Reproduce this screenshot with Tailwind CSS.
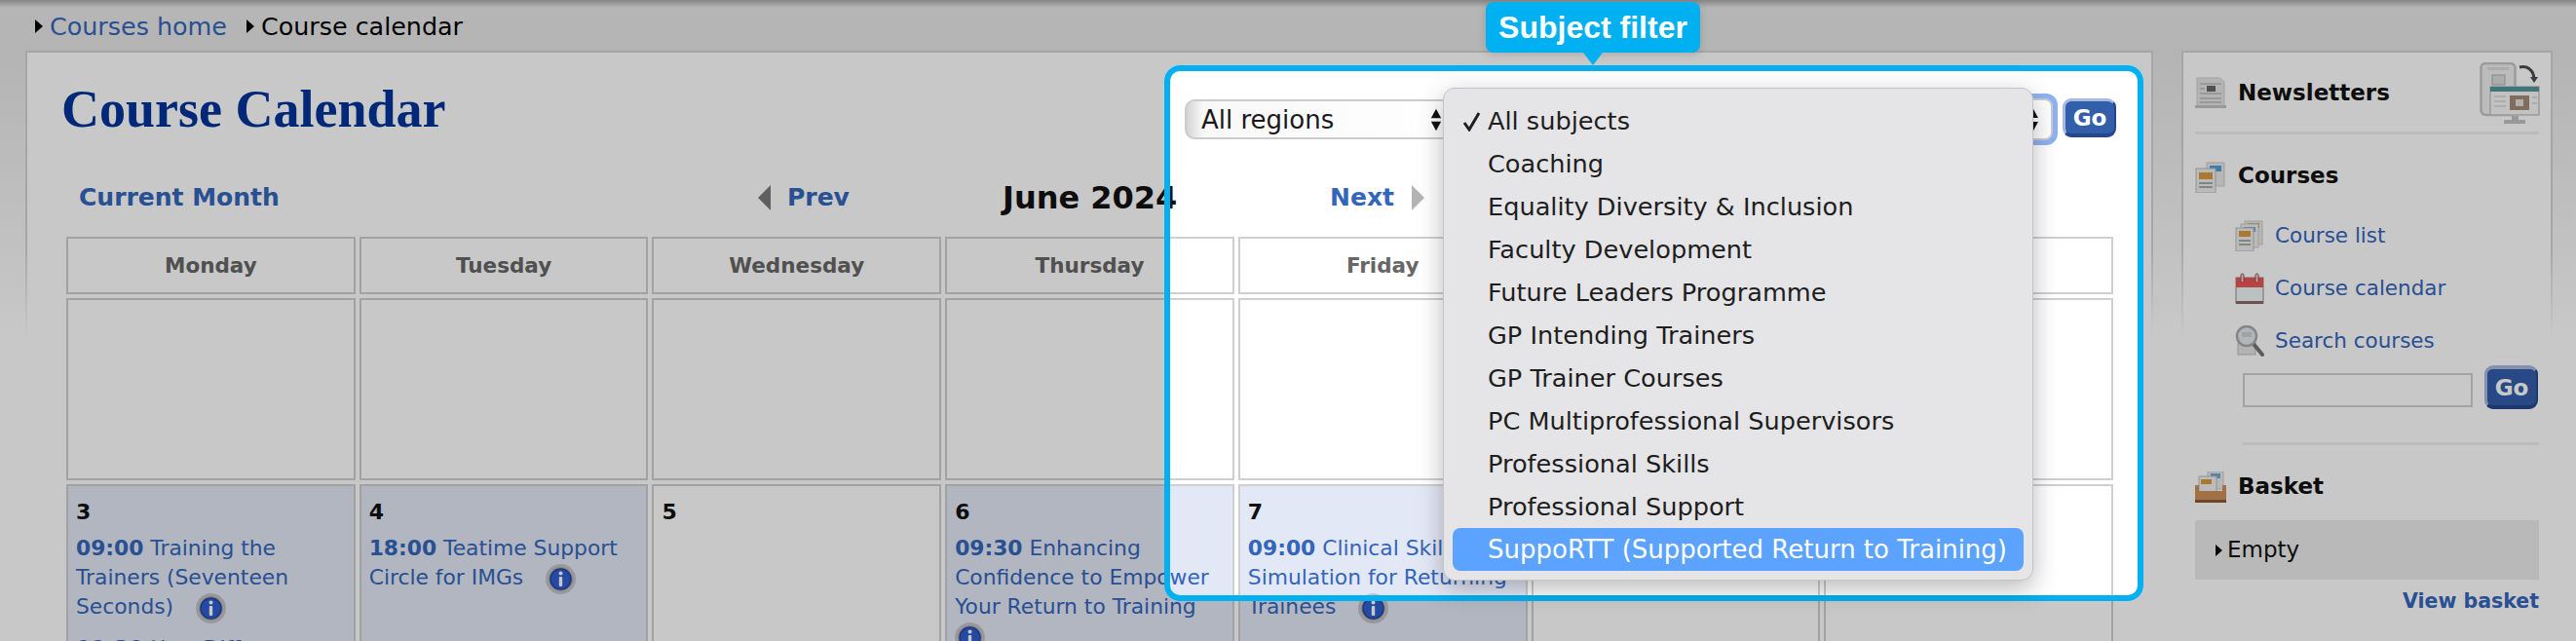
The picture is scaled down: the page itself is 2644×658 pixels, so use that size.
<!DOCTYPE html>
<html>
<head>
<title>Course calendar</title>
<script src="https://cdn.jsdelivr.net/npm/@tailwindcss/browser@4"></script>
</head>
<body>
<div class="relative w-[2644px] h-[658px] overflow-hidden font-['DejaVu_Sans',sans-serif] bg-[linear-gradient(to_bottom,#aaaaaa,#e8e8e8_8px,#e6e6e6_52px,#ffffff_345px)]">

  <!-- breadcrumb -->
  <div class="flex items-center h-[52px] pl-[36px] text-[25.4px] pt-[2px]">
    <svg class="w-[8px] h-[14px] mr-[7px]" viewBox="0 0 8 14"><path d="M0 0L8 7L0 14Z" fill="#000"/></svg>
    <a class="text-[#3366bb]">Courses home</a>
    <svg class="w-[8px] h-[14px] ml-[20px] mr-[7px]" viewBox="0 0 8 14"><path d="M0 0L8 7L0 14Z" fill="#000"/></svg>
    <span class="text-black">Course calendar</span>
  </div>

  <div class="flex items-start ml-[26px]">
    <!-- main panel -->
    <div class="w-[2184px] h-[640px] pt-[2px] px-[2px] bg-[linear-gradient(to_bottom,#d4d4d4,#d4d4d4_200px,#ffffff_295px)]">
      <div class="bg-white h-full pl-[40px] pr-[36px]">
        <div class="flex items-start h-[128px]">
          <h1 class="mt-[28px] -ml-[5px] font-['Liberation_Serif',serif] font-bold text-[54px] leading-[60px] text-[#003399]">Course Calendar</h1>
          <div class="ml-auto mt-[47px] flex items-start">
            <div class="flex items-center justify-between w-[280px] h-[41px] mt-[1px] rounded-[10px] border-2 border-[#cccccc] bg-[linear-gradient(to_right,#d4d4d4,#f8f8f8_6%,#ffffff)] pl-[15px] pr-[14px] text-[26px] leading-[36px] text-[#1a1a1a]">
              All regions
              <svg class="w-[12px] h-[24px]" viewBox="0 0 14 28"><path d="M7 1L13 12H1ZM7 27L1 16H13Z" fill="#111"/></svg>
            </div>
            <div class="ml-[9px] w-[607px] h-[53px] -mt-[5px] rounded-[12px] bg-[#8eb2f2] p-[5px]">
              <div class="w-full h-full rounded-[8px] border-2 border-[#cccccc] bg-white flex items-center justify-end pr-[12px]">
                <svg class="w-[14px] h-[28px]" viewBox="0 0 14 28"><path d="M7 1L13 12H1ZM7 27L1 16H13Z" fill="#111"/></svg>
              </div>
            </div>
            <button class="ml-[5px] w-[55px] h-[40px] rounded-[9px] border-t-[3px] border-l-[3px] border-r-[2px] border-b-[4px] border-t-[#a6b9e0] border-l-[#a6b9e0] border-r-[#24488c] border-b-[#24488c] bg-[#335eaa] text-white font-bold text-[23px] leading-[30px]">Go</button>
          </div>
        </div>

        <div class="flex items-center h-[40px] mt-[1px] mb-[20px] font-bold text-[#3366bb] text-[25px]">
          <a class="ml-[13px] w-[697px]">Current Month</a>
          <svg class="w-[13px] h-[26px] mr-[17px]" viewBox="0 0 13 26"><path d="M13 0V26L0 13Z" fill="#7a7a7a"/></svg>
          <a class="w-[221px]">Prev</a>
          <span class="w-[336px] text-[32px] text-[#111111]">June 2024</span>
          <a class="w-[84px]">Next</a>
          <svg class="w-[13px] h-[26px]" viewBox="0 0 13 26"><path d="M0 0V26L13 13Z" fill="#b4b4b4"/></svg>
        </div>

        <div class="grid grid-cols-7 gap-[4px] grid-rows-[59px_187px_220px] w-[2101px] text-[21.8px] leading-[30px] text-[#3366bb]">
          <div class="border-2 border-[#cfcfcf] flex items-center justify-center font-bold text-[21.5px] text-[#666666]">Monday</div>
          <div class="border-2 border-[#cfcfcf] flex items-center justify-center font-bold text-[21.5px] text-[#666666]">Tuesday</div>
          <div class="border-2 border-[#cfcfcf] flex items-center justify-center font-bold text-[21.5px] text-[#666666]">Wednesday</div>
          <div class="border-2 border-[#cfcfcf] flex items-center justify-center font-bold text-[21.5px] text-[#666666]">Thursday</div>
          <div class="border-2 border-[#cfcfcf] flex items-center justify-center font-bold text-[21.5px] text-[#666666]">Friday</div>
          <div class="border-2 border-[#cfcfcf] flex items-center justify-center font-bold text-[21.5px] text-[#666666]">Saturday</div>
          <div class="border-2 border-[#cfcfcf] flex items-center justify-center font-bold text-[21.5px] text-[#666666]">Sunday</div>

          <div class="border-2 border-[#cfcfcf]"></div>
          <div class="border-2 border-[#cfcfcf]"></div>
          <div class="border-2 border-[#cfcfcf]"></div>
          <div class="border-2 border-[#cfcfcf]"></div>
          <div class="border-2 border-[#cfcfcf]"></div>
          <div class="border-2 border-[#cfcfcf]"></div>
          <div class="border-2 border-[#cfcfcf]"></div>

          <div class="border-2 border-[#cfcfcf] bg-[#e3e8f6] pt-[12px] pl-[8px]">
            <div class="font-bold text-[22px] text-[#111111] mb-[7px]">3</div>
            <div class="mb-[13px]"><b>09:00</b> Training the Trainers (Seventeen Seconds)
              <svg class="inline-block align-middle ml-[16px] -my-[2px] w-[31px] h-[31px]" viewBox="0 0 31 31"><circle cx="15.5" cy="15.5" r="14" fill="#a9aab0" stroke="#c4c4c8" stroke-width="3"/><circle cx="15.5" cy="15.5" r="10.5" fill="#2f5fd0" stroke="#24459c" stroke-width="1.5"/><circle cx="15.5" cy="9.5" r="2" fill="#fff"/><rect x="13.8" y="13" width="3.4" height="10" rx="1" fill="#fff"/></svg>
            </div>
            <div><b>09:30</b> How Different</div>
          </div>
          <div class="border-2 border-[#cfcfcf] bg-[#e3e8f6] pt-[12px] pl-[8px]">
            <div class="font-bold text-[22px] text-[#111111] mb-[7px]">4</div>
            <div><b>18:00</b> Teatime Support Circle for IMGs
              <svg class="inline-block align-middle ml-[16px] -my-[2px] w-[31px] h-[31px]" viewBox="0 0 31 31"><circle cx="15.5" cy="15.5" r="14" fill="#a9aab0" stroke="#c4c4c8" stroke-width="3"/><circle cx="15.5" cy="15.5" r="10.5" fill="#2f5fd0" stroke="#24459c" stroke-width="1.5"/><circle cx="15.5" cy="9.5" r="2" fill="#fff"/><rect x="13.8" y="13" width="3.4" height="10" rx="1" fill="#fff"/></svg>
            </div>
          </div>
          <div class="border-2 border-[#cfcfcf] pt-[12px] pl-[8px]">
            <div class="font-bold text-[22px] text-[#111111]">5</div>
          </div>
          <div class="border-2 border-[#cfcfcf] bg-[#e3e8f6] pt-[12px] pl-[8px]">
            <div class="font-bold text-[22px] text-[#111111] mb-[7px]">6</div>
            <div><b>09:30</b> Enhancing Confidence to Empower Your Return to Training
              <svg class="inline-block align-middle -my-[2px] w-[31px] h-[31px]" viewBox="0 0 31 31"><circle cx="15.5" cy="15.5" r="14" fill="#a9aab0" stroke="#c4c4c8" stroke-width="3"/><circle cx="15.5" cy="15.5" r="10.5" fill="#2f5fd0" stroke="#24459c" stroke-width="1.5"/><circle cx="15.5" cy="9.5" r="2" fill="#fff"/><rect x="13.8" y="13" width="3.4" height="10" rx="1" fill="#fff"/></svg>
            </div>
          </div>
          <div class="border-2 border-[#cfcfcf] bg-[#e3e8f6] pt-[12px] pl-[8px]">
            <div class="font-bold text-[22px] text-[#111111] mb-[7px]">7</div>
            <div><b>09:00</b> Clinical Skills Simulation for Returning Trainees
              <svg class="inline-block align-middle ml-[16px] -my-[2px] w-[31px] h-[31px]" viewBox="0 0 31 31"><circle cx="15.5" cy="15.5" r="14" fill="#a9aab0" stroke="#c4c4c8" stroke-width="3"/><circle cx="15.5" cy="15.5" r="10.5" fill="#2f5fd0" stroke="#24459c" stroke-width="1.5"/><circle cx="15.5" cy="9.5" r="2" fill="#fff"/><rect x="13.8" y="13" width="3.4" height="10" rx="1" fill="#fff"/></svg>
            </div>
          </div>
          <div class="border-2 border-[#cfcfcf] pt-[12px] pl-[8px]">
            <div class="font-bold text-[22px] text-[#111111]">8</div>
          </div>
          <div class="border-2 border-[#cfcfcf] pt-[12px] pl-[8px]">
            <div class="font-bold text-[22px] text-[#111111]">9</div>
          </div>
        </div>
      </div>
    </div>

    <!-- sidebar -->
    <div class="ml-[29px] w-[381px] h-[640px] pt-[2px] px-[2px] bg-[linear-gradient(to_bottom,#d4d4d4,#d4d4d4_200px,#ffffff_295px)]">
      <div class="bg-white h-full px-[12px] text-[21.5px] text-[#3366bb]">
        <div class="relative flex items-center h-[84px] border-b-[3px] border-[#f0f0f0] pt-[1px]">
          <svg class="w-[32px] h-[32px] mr-[12px]" viewBox="0 0 32 32"><path d="M2 1H26L30 5V30H2Z" fill="#e6e6e6" stroke="#d0d0d0"/><path d="M5 7H27M5 12H10M5 17H27M5 22H27M5 26H27" stroke="#b8b8b8" stroke-width="1.5"/><rect x="12" y="9" width="9" height="6" fill="#666"/><rect x="0" y="29" width="32" height="3" fill="#c4c4c4"/></svg>
          <h2 class="font-bold text-[23px] text-[#111111]">Newsletters</h2>
          <svg class="absolute right-[-2px] top-[10px] w-[63px] h-[64px]" viewBox="0 0 63 64"><rect x="1.5" y="1" width="35" height="53" rx="5" fill="#f0f0f0" stroke="#c6c6c6" stroke-width="2.5"/><rect x="8" y="5" width="22" height="3" fill="#dddddd"/><rect x="13" y="13" width="13" height="10" fill="#dcdcdc" stroke="#b0b0b0"/><rect x="11" y="25" width="50" height="29" fill="#f8f8f8" stroke="#c6c6c6" stroke-width="1.5"/><rect x="11" y="25" width="50" height="5" fill="#53979b"/><rect x="31" y="34" width="20" height="15" fill="#a58c78"/><rect x="37" y="38" width="8" height="7" fill="#e4e0dc"/><path d="M15 35H27M15 40H27M15 45H27M54 36H59M54 42H59" stroke="#dddddd" stroke-width="2"/><path d="M33 55H40V59H47V63H25V59H33Z" fill="#c4c4c4"/><path d="M41 5C50 3 56 9 56 18" fill="none" stroke="#4c4c4c" stroke-width="3"/><path d="M52 15L56 21L60 15Z" fill="#4c4c4c"/></svg>
        </div>

        <div class="flex items-start mt-[28px]">
          <svg class="w-[32px] h-[32px] mr-[12px]" viewBox="0 0 32 32"><rect x="12" y="1" width="18" height="24" fill="#e8e8e8" stroke="#ccc"/><rect x="15" y="4" width="12" height="6" fill="#4f9fd6"/><rect x="1" y="7" width="20" height="25" fill="#ededed" stroke="#bbb"/><rect x="4" y="11" width="14" height="7" fill="#d99a3c"/><path d="M4 22H18M4 26H18" stroke="#aaa" stroke-width="2"/></svg>
          <h2 class="font-bold text-[23px] leading-[30px] text-[#111111] -mt-[1px]">Courses</h2>
        </div>

        <div class="flex items-center ml-[41px] mt-[28px] h-[32px]">
          <svg class="w-[30px] h-[32px] mr-[11px]" viewBox="0 0 30 32"><rect x="10" y="1" width="18" height="24" fill="#e8e8e8" stroke="#ccc"/><rect x="13" y="3" width="12" height="5" fill="#c99548"/><rect x="6" y="4" width="18" height="24" fill="#eee" stroke="#ccc"/><rect x="9" y="7" width="12" height="5" fill="#6ea8d8"/><rect x="1" y="8" width="18" height="24" fill="#eee" stroke="#bbb"/><rect x="4" y="11" width="12" height="6" fill="#d99a3c"/><path d="M4 21H16M4 25H16" stroke="#aaa" stroke-width="2"/></svg>
          <a>Course list</a>
        </div>
        <div class="flex items-center ml-[41px] mt-[22px] h-[32px]">
          <svg class="w-[30px] h-[32px] mr-[11px]" viewBox="0 0 30 32"><rect x="1" y="5" width="28" height="26" fill="#eef6f6" stroke="#9a8a88"/><rect x="1" y="5" width="28" height="10" fill="#ee5555"/><rect x="1" y="29" width="28" height="3" fill="#8a6a66"/><rect x="6" y="1" width="3" height="9" rx="1.5" fill="#dddddd" stroke="#9a4444"/><rect x="21" y="1" width="3" height="9" rx="1.5" fill="#dddddd" stroke="#9a4444"/></svg>
          <a>Course calendar</a>
        </div>
        <div class="flex items-center ml-[41px] mt-[22px] h-[32px]">
          <svg class="w-[30px] h-[32px] mr-[11px]" viewBox="0 0 30 32"><rect x="3" y="18" width="18" height="12" fill="#e4e4e4" stroke="#bbb"/><path d="M19 19L28 30" stroke="#777" stroke-width="4" stroke-linecap="round"/><circle cx="12" cy="11" r="10" fill="#dfe8f0" stroke="#aaa" stroke-width="2.5"/><rect x="7" y="7" width="10" height="5" fill="#cfcfcf"/></svg>
          <a>Search courses</a>
        </div>
        <div class="flex items-start ml-[49px] mt-[9px] pb-[34px] border-b-[3px] border-[#f0f0f0]">
          <div class="w-[236px] h-[35px] mt-[8px] border-2 border-[#d0d0d0] bg-white"></div>
          <button class="ml-[12px] w-[55px] h-[45px] rounded-[9px] border-t-[4px] border-l-[3px] border-r-[2px] border-b-[4px] border-t-[#a6b9e0] border-l-[#a6b9e0] border-r-[#24488c] border-b-[#24488c] bg-[#335eaa] text-white font-bold text-[23px] leading-[30px]">Go</button>
        </div>

        <div class="flex items-start mt-[27px]">
          <svg class="w-[32px] h-[32px] mr-[12px]" viewBox="0 0 32 32"><rect x="13" y="0" width="16" height="18" fill="#e8e8e8" stroke="#ccc"/><rect x="16" y="2" width="10" height="5" fill="#6ea8d8"/><rect x="4" y="5" width="18" height="16" fill="#f0f0f0" stroke="#bbb"/><rect x="6" y="8" width="11" height="5" fill="#d99a3c"/><path d="M0 14L4 14V20H28V14H32V32H0Z" fill="#cf8f58"/><rect x="0" y="29" width="32" height="3" fill="#8e5a30"/></svg>
          <h2 class="font-bold text-[23px] leading-[30px] text-[#111111]">Basket</h2>
        </div>
        <div class="flex items-center mt-[18px] h-[61px] pl-[21px] bg-[#ececec] text-[23px] text-[#111111]">
          <svg class="w-[7px] h-[12px] mr-[5px]" viewBox="0 0 8 14"><path d="M0 0L8 7L0 14Z" fill="#000"/></svg>
          Empty
        </div>
        <div class="text-right mt-[7px] font-bold text-[20.5px] leading-[30px]"><a>View basket</a></div>
      </div>
    </div>
  </div>

  <!-- spotlight round the filter, dims everything else -->
  <div class="absolute left-[1195px] top-[67px] w-[1005px] h-[550px] rounded-[16px] border-[6px] border-[#00b0f0] shadow-[0_0_0_3000px_rgba(0,0,0,0.216)] pointer-events-none"></div>

  <!-- callout -->
  <div class="absolute left-[1525px] top-[2px] w-[220px] h-[52px] rounded-[8px] bg-[#00b0f0] text-white text-center font-['Liberation_Sans',sans-serif] font-bold text-[32px] leading-[52px] shadow-[0_2px_8px_rgba(0,0,0,0.15)]">Subject filter</div>
  <svg class="absolute left-[1625px] top-[54px] w-[20px] h-[13px]" viewBox="0 0 20 13"><path d="M0 0H20L10 13Z" fill="#00b0f0"/></svg>

  <!-- open select menu -->
  <div class="absolute left-[1481px] top-[90px] w-[606px] h-[506px] rounded-[12px] border border-[#c4c4c4] bg-[#e5e5e7] pt-[11px] px-[9px] text-[25.6px] leading-[44px] text-[#1e1e1e] shadow-[0_8px_26px_rgba(0,0,0,0.28)]">
    <div class="flex items-center h-[44px]"><svg class="w-[19px] h-[21px] ml-[10px] mr-[7px]" viewBox="0 0 19 21"><path d="M2 12L7 19L17 2" fill="none" stroke="#1e1e1e" stroke-width="3"/></svg>All subjects</div>
    <div class="h-[44px] pl-[36px]">Coaching</div>
    <div class="h-[44px] pl-[36px]">Equality Diversity &amp; Inclusion</div>
    <div class="h-[44px] pl-[36px]">Faculty Development</div>
    <div class="h-[44px] pl-[36px]">Future Leaders Programme</div>
    <div class="h-[44px] pl-[36px]">GP Intending Trainers</div>
    <div class="h-[44px] pl-[36px]">GP Trainer Courses</div>
    <div class="h-[44px] pl-[36px]">PC Multiprofessional Supervisors</div>
    <div class="h-[44px] pl-[36px]">Professional Skills</div>
    <div class="h-[44px] pl-[36px]">Professional Support</div>
    <div class="h-[44px] pl-[36px] rounded-[8px] bg-[#5ba3fe] text-[26px] text-white">SuppoRTT (Supported Return to Training)</div>
  </div>
</div>
</body>
</html>
